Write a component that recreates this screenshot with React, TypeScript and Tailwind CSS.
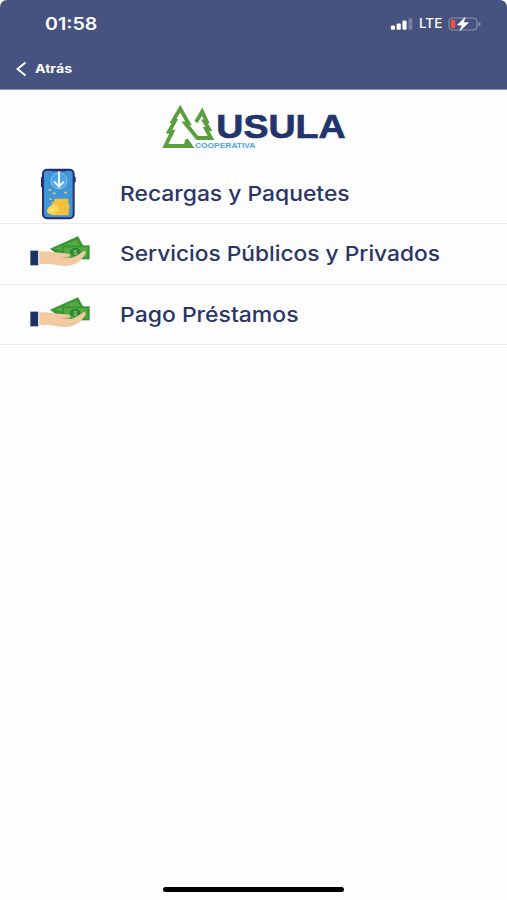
import React from 'react';

type MenuOption = {
    id: string;
    label: string;
    icon: 'phone' | 'money';
    labelClass: string;
};

const options: MenuOption[] = [
    { id: 'recargas', label: 'Recargas y Paquetes', icon: 'phone', labelClass: 'scale-x-[1.115] pt-[3px]' },
    { id: 'servicios', label: 'Servicios Públicos y Privados', icon: 'money', labelClass: 'scale-x-[1.108] pt-[2px]' },
    { id: 'prestamos', label: 'Pago Préstamos', icon: 'money', labelClass: 'scale-x-[1.12] pt-[1px]' },
];

function StatusIcons() {
    return (
        <div className="flex items-center text-white">
            <svg width="23" height="14" viewBox="0 0 23 14" fill="#fff">
                <rect x="0.8" y="8.5" width="4.2" height="4.2" rx="1.2" />
                <rect x="6.6" y="6.4" width="4.2" height="6.3" rx="1.2" />
                <rect x="12.4" y="3.6" width="4.2" height="9.1" rx="1.2" />
                <rect x="18.4" y="1.2" width="4" height="11.5" rx="1.2" opacity="0.25" />
            </svg>
            <span className="ml-[6px] w-[24px] text-[13.5px] leading-none font-medium whitespace-nowrap">LTE</span>
            <svg className="ml-[5px]" width="34" height="14" viewBox="0 0 34 14">
                <rect x="0.9" y="1" width="28" height="12" rx="3.4" fill="none" stroke="#fff" strokeOpacity="0.4" />
                <path d="M30.5 5v4.2c1.6-.5 2.2-1.1 2.2-2.1S32.1 5.5 30.5 5z" fill="#fff" opacity="0.4" />
                <rect x="2.7" y="2.8" width="4.6" height="8.4" rx="1.2" fill="#f0513f" />
                <path d="M17 0.5L9.5 8h4.8L12 13.5l8.4-7.8h-5z" fill="#fff" stroke="#fff" strokeWidth="0.8" strokeLinejoin="round" />
            </svg>
        </div>
    );
}

function Logo() {
    return (
        <svg width="210" height="65" viewBox="0 0 630 195">
            {/* large tree, its right side runs on as the base of the small one */}
            <path
                d="M108 134l14 19H46l21-43H57l18-32H69L90.5 41l25 44H106l36 44h41L168 102h9l-14-23h7L156.5 50 138 81"
                fill="none"
                stroke="#5a9e3d"
                strokeWidth="11.5"
            />
            <path d="M107 132l24 27H98z" fill="#5a9e3d" />
            <text
                x="199"
                y="130"
                fontFamily="Liberation Sans, sans-serif"
                fontSize="99"
                fontWeight="700"
                fill="#22346b"
                stroke="#22346b"
                strokeWidth="2"
                textLength="388"
                lengthAdjust="spacingAndGlyphs"
            >
                USULA
            </text>
            <text
                x="135"
                y="159"
                fontFamily="Liberation Sans, sans-serif"
                fontSize="21"
                fontWeight="700"
                fill="#4aa8e0"
                textLength="181"
                lengthAdjust="spacingAndGlyphs"
            >
                COOPERATIVA
            </text>
        </svg>
    );
}

function PhoneIcon() {
    return (
        <svg width="90" height="61" viewBox="0 -1.5 270 183">
            <rect x="63" y="43" width="8" height="32" rx="3" fill="#282c6b" />
            <rect x="158" y="42" width="9" height="18" rx="3" fill="#282c6b" />
            <rect x="69" y="22" width="92" height="145" rx="12" fill="#3c96d8" stroke="#282c6b" strokeWidth="6" />
            <path d="M89 20h53l-5 6H95z" fill="#282c6b" />
            <circle cx="117" cy="55" r="24" fill="#4ca5e2" stroke="#84c8ef" strokeWidth="3" />
            <path d="M117 27v42M102 57l15 15 15-15" fill="none" stroke="#eefaff" strokeWidth="6" />
            <path d="M85 80h9v5h-9zM98 90h9v5h-9zM132 88h9v5h-9zM87 107h9v5h-9z" fill="#d5c478" />
            <path d="M103 109h42v15h3v16h-2v18H95v-40h8z" fill="#f3c13d" />
            <path d="M118 122h25M118 137h29M112 150h34" stroke="#e9b537" strokeWidth="2" />
            <ellipse cx="99" cy="141" rx="19" ry="14" fill="#f8d552" transform="rotate(-28 99 141)" />
            <path d="M90 146l16-12" stroke="#ffe375" strokeWidth="6" />
        </svg>
    );
}

function MoneyHandIcon() {
    return (
        <svg width="90" height="61" viewBox="0 -4 270 183">
            <path d="M90 73l84-37 18 32-63 36z" fill="#389735" />
            <path d="M104 73l66-27 10 17-51 17z" fill="#57aa42" />
            <path d="M125 63h84v42h-84z" fill="#389735" />
            <path d="M132 69h70v29h-70z" fill="#57aa42" />
            <ellipse cx="166" cy="83" rx="16" ry="13" fill="#2c8735" />
            <text x="160" y="91" fontFamily="Liberation Sans, sans-serif" fontSize="22" fontWeight="700" fill="#80c665">$</text>
            {/* palm, then the thumb over the notes */}
            <path d="M56 82c16-2 28-2 41 2l22 1 27 3c7 2 6 9-1 9l-17 2 26 1c14-2 24-12 34-18 8-3 12 2 7 9-9 14-22 25-37 30-17 6-34 4-50 1l-22-4-30 2z" fill="#f2caa2" />
            <path d="M148 92c0 4-4 5-8 5l-17 2 24 2" fill="none" stroke="#dfab85" strokeWidth="1.5" />
            <path d="M31 79h24v44H31z" fill="#1b3264" />
            <path d="M54 82h4v38h-4z" fill="#dce5ef" />
        </svg>
    );
}

export default function App() {
    return (
        <div className="flex h-[900px] w-[507px] flex-col overflow-hidden bg-[#fdfdfd] font-[Inter,sans-serif]">
            <div className="bg-white">
                <header className="h-[90px] rounded-t-[7px] border-b border-[#8b92ae] bg-[#46527f] text-white">
                    <div className="flex h-[48px] items-center justify-between pr-[25px] pl-[45px]">
                        <span className="origin-left scale-x-[1.15] text-[17px] leading-none font-semibold">01:58</span>
                        <StatusIcons />
                    </div>
                    <button className="flex h-[41px] items-center pl-[16px]">
                        <svg width="11" height="16" viewBox="0 0 11 16" fill="none" stroke="#fff" strokeWidth="2">
                            <path d="M9.5 1.5L1.5 8l8 6.5" />
                        </svg>
                        <span className="ml-[8px] origin-left scale-x-[1.18] text-[12px] leading-none font-bold">Atrás</span>
                    </button>
                </header>
            </div>

            <div className="flex h-[73px] pt-[5px] pl-[150px]">
                <Logo />
            </div>

            <nav>
                {options.map((option) => (
                    <button
                        key={option.id}
                        className="flex h-[60.75px] w-full items-center border-b border-[#ebebed] pl-[20px] text-left"
                    >
                        {option.icon === 'phone' ? <PhoneIcon /> : <MoneyHandIcon />}
                        <span
                            className={`ml-[10px] origin-left text-[20.5px] leading-none font-medium whitespace-nowrap text-[#2a3568] ${option.labelClass}`}
                        >
                            {option.label}
                        </span>
                    </button>
                ))}
            </nav>

            <div className="mt-auto flex justify-center pb-[8px]">
                <div className="h-[5px] w-[181px] rounded-full bg-black" />
            </div>
        </div>
    );
}
